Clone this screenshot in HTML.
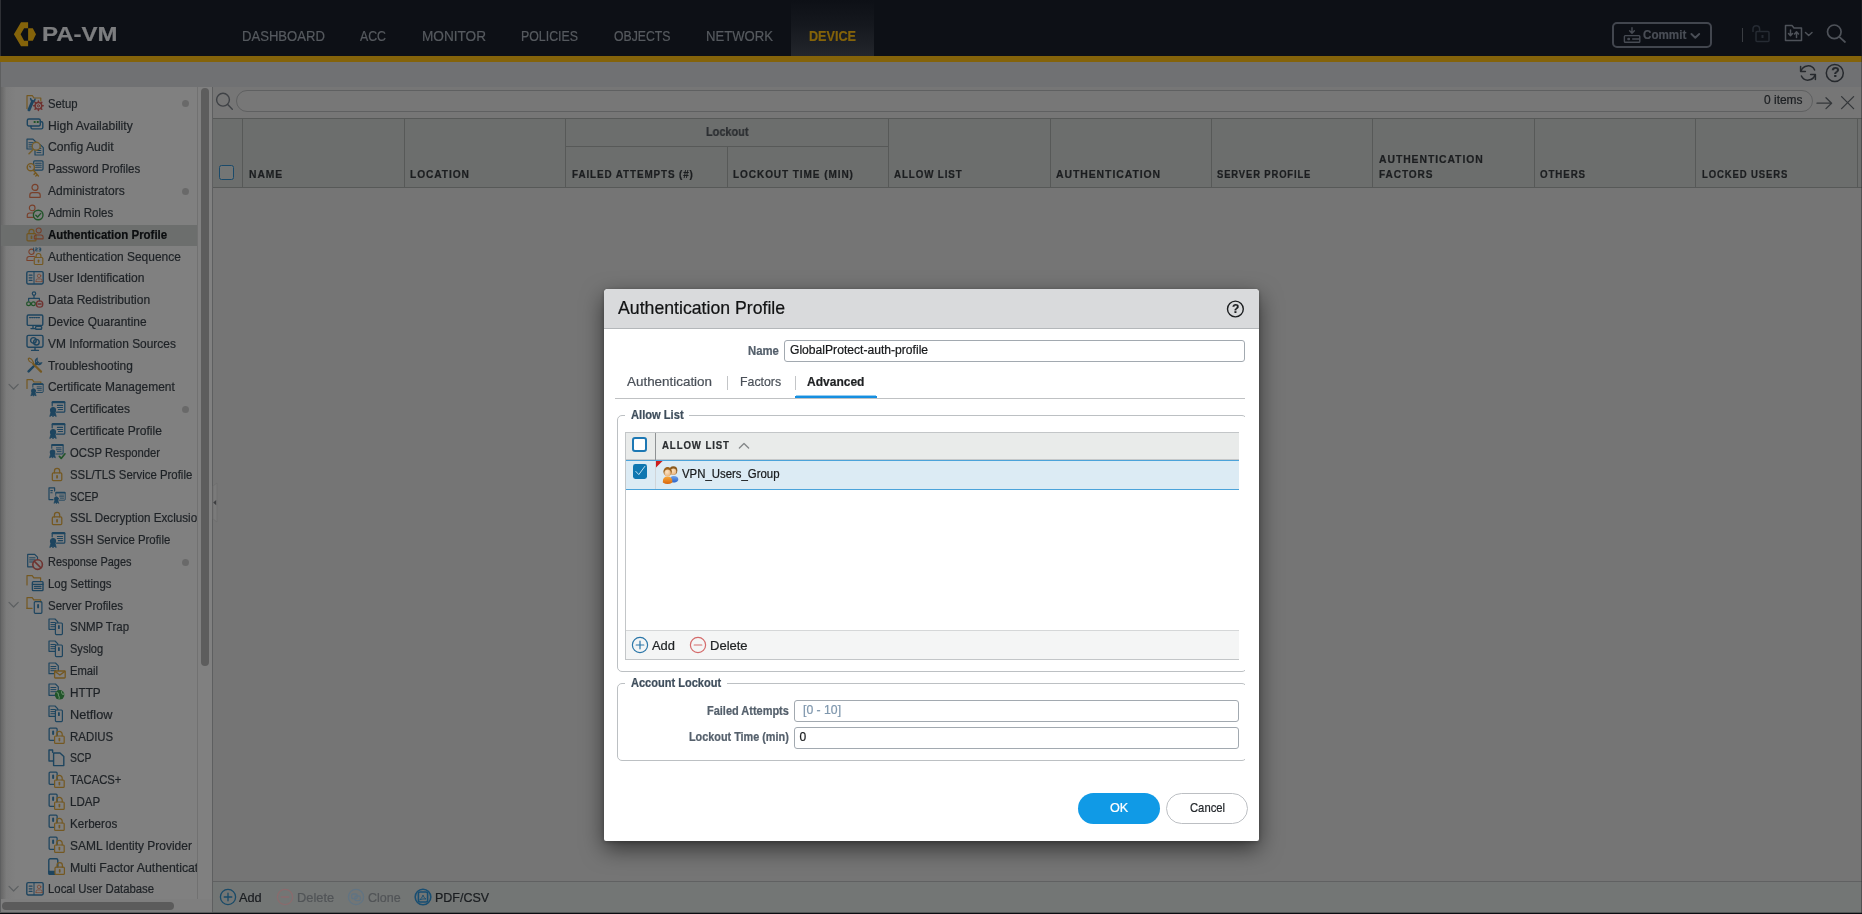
<!DOCTYPE html>
<html><head><meta charset="utf-8"><title>PA-VM</title>
<style>
html,body{margin:0;padding:0}
body{width:1862px;height:914px;overflow:hidden;position:relative;background:#757575;font-family:"Liberation Sans",sans-serif;}
.t{-webkit-text-stroke:0.22px currentColor;position:absolute;transform-origin:0 0;white-space:nowrap;line-height:1;font-family:"Liberation Sans",sans-serif;}
.a{position:absolute;}
svg{position:absolute;overflow:visible}
#root{position:absolute;left:0;top:0;width:1862px;height:914px;overflow:hidden;will-change:transform}

</style></head>
<body>
<div id="root">
<div class="a" style="left:0;top:0;width:1862px;height:56px;background:#0d1016"></div>
<div class="a" style="left:791px;top:0;width:83px;height:56px;background:linear-gradient(to bottom,#0d1016 0%,#15181e 45%,#23262c 100%)"></div>
<div class="a" style="left:0;top:56px;width:1862px;height:6px;background:#84630a"></div>
<div class="a" style="left:0;top:62px;width:1862px;height:25px;background:#707173"></div>
<svg style="left:0;top:0" width="60" height="56"><path d="M13.9 34.3 L21 22.3 L28.1 22.3 L28.1 28.2 L24.1 28.2 L20.6 34.3 L24.1 40.8 L28.1 40.8 L28.1 46.3 L21 46.3 Z" fill="#84630a"/><path d="M28.1 28.2 L32.8 28.2 L36 34.3 L32.8 40.8 L28.1 40.8 Z" fill="#84630a"/></svg>
<span class="t" style="left:42.00px;top:25.00px;font-size:19.5px;color:#7c7d7f;transform:scaleX(1.2308);font-weight:bold;">PA-VM</span>
<span class="t" style="left:241.50px;top:29.00px;font-size:14px;color:#565a5f;transform:scaleX(0.9343);">DASHBOARD</span>
<span class="t" style="left:360.30px;top:29.00px;font-size:14px;color:#565a5f;transform:scaleX(0.8802);">ACC</span>
<span class="t" style="left:422.30px;top:29.00px;font-size:14px;color:#565a5f;transform:scaleX(0.9726);">MONITOR</span>
<span class="t" style="left:521.30px;top:29.00px;font-size:14px;color:#565a5f;transform:scaleX(0.8832);">POLICIES</span>
<span class="t" style="left:614.00px;top:29.00px;font-size:14px;color:#565a5f;transform:scaleX(0.8739);">OBJECTS</span>
<span class="t" style="left:706.20px;top:29.00px;font-size:14px;color:#565a5f;transform:scaleX(0.9365);">NETWORK</span>
<span class="t" style="left:809.00px;top:29.00px;font-size:14px;color:#84630a;transform:scaleX(0.9025);font-weight:bold;">DEVICE</span>
<div class="a" style="left:1612px;top:22px;width:96px;height:22px;border:2px solid #42464e;border-radius:5px"></div>
<svg style="left:1620px;top:24px" width="24" height="22" fill="none" stroke="#474b53" stroke-width="1.4" stroke-linecap="round" stroke-linejoin="round"><path d="M12 3.8 V9 M9.6 6.8 L12 9.2 L14.4 6.8"/><rect x="4.4" y="11.6" width="15.4" height="6.6" rx="0.8"/><path d="M8.4 15 h0.6" stroke-width="2.4"/><path d="M12.6 15 H19.4" stroke-width="1.3"/></svg>
<span class="t" style="left:1642.90px;top:29.00px;font-size:12.6px;color:#4a4e56;transform:scaleX(0.9238);font-weight:bold;">Commit</span>
<svg style="left:1688px;top:28px" width="16" height="14" fill="none" stroke="#4a4e56" stroke-width="1.9" stroke-linecap="round" stroke-linejoin="round"><path d="M3.4 6 L7.3 9.7 L11.2 6"/></svg>
<div class="a" style="left:1742px;top:28px;width:1px;height:14px;background:#3a3d42"></div>
<svg style="left:1750px;top:22px" width="24" height="24" fill="none" stroke="#262b33" stroke-width="1.5" stroke-linejoin="round"><rect x="6" y="9.5" width="13" height="10" rx="1"/><path d="M3 10 V7 a3.3 3.3 0 0 1 6.6 0 V9.5"/><path d="M12.5 13 v3" stroke-width="2"/></svg>
<svg style="left:1783px;top:22px" width="34" height="24" fill="none" stroke="#4e5259" stroke-width="1.5" stroke-linejoin="round" stroke-linecap="round"><path d="M2.5 18.5 V3.5 H9 L11 6 H18.5 V18.5 Z"/><path d="M7.5 8 V13.5 M5.5 11.5 L7.5 13.7 L9.5 11.5 M13.5 15.5 V10 M11.5 12 L13.5 9.8 L15.5 12"/><path d="M22.5 10.5 L25.7 13.5 L29 10.5"/></svg>
<svg style="left:1822px;top:22px" width="28" height="24" fill="none" stroke="#4e5259" stroke-width="1.7" stroke-linecap="round"><circle cx="12.3" cy="9.8" r="6.8"/><path d="M17.3 14.8 L23 20"/></svg>
<svg style="left:1796px;top:62px" width="24" height="24" fill="none" stroke="#26292d" stroke-width="1.5" stroke-linecap="round" stroke-linejoin="round"><path d="M5 9.2 A7.3 7.3 0 0 1 18.6 8 M19 12.8 A7.3 7.3 0 0 1 5.4 14"/><path d="M4.6 4.6 V9.4 H9.4 M19.4 17.4 V12.6 H14.6"/></svg>
<svg style="left:1824px;top:62px" width="24" height="24" fill="none" stroke="#26292d" stroke-width="1.5"><circle cx="10.8" cy="11" r="8.5"/></svg>
<span class="t" style="left:1831.20px;top:65.00px;font-size:14px;color:#26292d;font-weight:bold;">?</span>
<div class="a" style="left:0;top:87px;width:197px;height:827px;background:#808080"></div>
<div class="a" style="left:0;top:87px;width:16px;height:827px;background:linear-gradient(to right,rgba(70,70,70,.5),rgba(100,100,100,.14) 40%,rgba(130,130,130,0))"></div>
<div class="a" style="left:197px;top:87px;width:1px;height:827px;background:#717171"></div>
<div class="a" style="left:198px;top:87px;width:14px;height:827px;background:#808080"></div>
<div class="a" style="left:201px;top:88px;width:8px;height:578px;border-radius:4px;background:#5d5d5d"></div>
<div class="a" style="left:1px;top:225px;width:196px;height:20.5px;background:#6c6e6d"></div>
<div class="a" style="left:0;top:87px;width:197px;height:816px;overflow:hidden"><div class="a" style="left:0;top:-87px"><svg style="left:25.9px;top:94.2px;opacity:.88" width="18" height="18" viewBox="0 0 18 18"><g fill="none" stroke="#735315" stroke-width="1.2" stroke-linecap="round" stroke-linejoin="round"><path d="M1 14.5 V1.7 H6.3 L8 4 H14.8 V7"/></g><g fill="none" stroke="#113d5b" stroke-width="1.2" stroke-linecap="round" stroke-linejoin="round"><path d="M3 15.8 L6.6 7.4" stroke-width="3"/><path d="M4.6 4.6 L5.6 7 L8.2 7.4 L9 5.2" stroke-width="1.5"/></g><g fill="none" stroke="#6c2825" stroke-width="1.2" stroke-linecap="round" stroke-linejoin="round"><circle cx="12.4" cy="11.8" r="3.3" stroke-width="1.5"/><circle cx="12.4" cy="11.8" r="1.1" stroke-width="1"/><path d="M12.4 7 v1.2 M12.4 15.4 v1.2 M7.6 11.8 h1.2 M16 11.8 h1.2 M9 8.4 l0.9 0.9 M14.9 14.3 l0.9 0.9 M15.8 8.4 l-0.9 0.9 M9.9 14.3 l-0.9 0.9" stroke-width="1.5"/></g></svg><span class="t" style="left:48.20px;top:97.00px;font-size:13px;color:#1e2226;transform:scaleX(0.8694);">Setup</span><div class="a" style="left:181.5px;top:100.2px;width:7px;height:7px;border-radius:50%;background:#696969"></div><svg style="left:25.9px;top:116.1px;opacity:.88" width="18" height="18" viewBox="0 0 18 18"><g fill="none" stroke="#113d5b" stroke-width="1.4" stroke-linecap="round" stroke-linejoin="round"><path d="M5 10.2 V11.5 a1.4 1.4 0 0 0 1.4 1.4 H15.4 a1.4 1.4 0 0 0 1.4 -1.4 V7.2 a1.4 1.4 0 0 0 -1.4 -1.4 H14.3"/><rect x="1.3" y="3" width="13" height="7" rx="1.5"/></g><rect x="7.7" y="5" width="1.9" height="2" fill="#154e1e"/><rect x="10.8" y="5" width="1.9" height="2" fill="#154e1e"/></svg><span class="t" style="left:48.20px;top:119.00px;font-size:13px;color:#1e2226;transform:scaleX(0.9332);">High Availability</span><svg style="left:25.9px;top:137.9px;opacity:.88" width="18" height="18" viewBox="0 0 18 18"><g transform="translate(0.3,0.5) scale(1.0)"><g fill="none" stroke="#113d5b" stroke-width="1.2" stroke-linecap="round" stroke-linejoin="round"><path d="M0.7 0.7 H6.7 L9.5 3.5 V10.5 H0.7 Z"/><path d="M2.6 4.2 H7.1 M2.6 6.3 H7.1 M2.6 8.4 H7.1" stroke-width="1"/></g></g><g transform="translate(8.3,6.2) scale(1.0)"><g fill="none" stroke="#113d5b" stroke-width="1.2" stroke-linecap="round" stroke-linejoin="round"><path d="M0.7 0.7 H6.2 L9 3.5 V10.8 H0.7 Z"/><path d="M2.6 4.2 H6.6 M2.6 6.3 H6.6 M2.6 8.4 H6.6" stroke-width="1"/></g></g><g fill="none" stroke="#735a22" stroke-width="1.4" stroke-linecap="round" stroke-linejoin="round"><circle cx="10.2" cy="8.2" r="4" fill="#7f7f7f"/><path d="M7.2 11.4 L3 15.8" stroke-width="1.5"/></g></svg><span class="t" style="left:48.20px;top:140.00px;font-size:13px;color:#1e2226;transform:scaleX(0.9362);">Config Audit</span><svg style="left:25.9px;top:159.7px;opacity:.88" width="18" height="18" viewBox="0 0 18 18"><g fill="none" stroke="#113d5b" stroke-width="1.2" stroke-linecap="round" stroke-linejoin="round"><rect x="7.7" y="0.8" width="9.3" height="9.3" rx="1"/><path d="M9.6 3.2 H15.2 M9.6 5.2 H15.2 M9.6 7.2 H15.2" stroke-width="1.1"/></g><g fill="none" stroke="#735315" stroke-width="1.4" stroke-linecap="round" stroke-linejoin="round"><circle cx="4.8" cy="7.2" r="3.6" fill="#808080"/><path d="M7.2 10 L12.4 16 M9.6 13 L8 14.4 M11.2 14.8 L9.8 16" stroke-width="1.4"/><path d="M3.6 6.2 l0.8 0.8" stroke-width="1.5"/></g></svg><span class="t" style="left:48.20px;top:162.00px;font-size:13px;color:#1e2226;transform:scaleX(0.8865);">Password Profiles</span><svg style="left:25.9px;top:181.5px;opacity:.88" width="18" height="18" viewBox="0 0 18 18"><g transform="translate(3,1.8) scale(1.0)"><g fill="none" stroke="#783820" stroke-width="1.2" stroke-linecap="round" stroke-linejoin="round"><circle cx="6" cy="3.6" r="3"/><path d="M0.8 13.5 V11.5 a2.6 2.6 0 0 1 2.6 -2.6 H8.6 a2.6 2.6 0 0 1 2.6 2.6 V13.5 M0.8 13.5 H11.2" /></g></g></svg><span class="t" style="left:48.20px;top:184.00px;font-size:13px;color:#1e2226;transform:scaleX(0.9245);">Administrators</span><div class="a" style="left:181.5px;top:187.5px;width:7px;height:7px;border-radius:50%;background:#696969"></div><svg style="left:25.9px;top:203.4px;opacity:.88" width="18" height="18" viewBox="0 0 18 18"><g transform="translate(0.5,1.5) scale(0.95)"><g fill="none" stroke="#783820" stroke-width="1.2" stroke-linecap="round" stroke-linejoin="round"><circle cx="6" cy="3.6" r="3"/><path d="M0.8 13.5 V11.5 a2.6 2.6 0 0 1 2.6 -2.6 H8.6 a2.6 2.6 0 0 1 2.6 2.6 V13.5 M0.8 13.5 H11.2" /></g></g><g fill="none" stroke="#154e1e" stroke-width="1.4" stroke-linecap="round" stroke-linejoin="round"><circle cx="12.2" cy="12" r="4.8" fill="#808080"/><path d="M9.8 12.2 L11.6 14 L14.8 10.4"/></g></svg><span class="t" style="left:48.20px;top:206.00px;font-size:13px;color:#1e2226;transform:scaleX(0.8845);">Admin Roles</span><svg style="left:25.9px;top:225.2px;opacity:.88" width="18" height="18" viewBox="0 0 18 18"><g transform="translate(0.3,3.6) scale(1.0)"><g fill="none" stroke="#735315" stroke-width="1.2" stroke-linecap="round" stroke-linejoin="round"><rect x="0.7" y="5" width="9" height="7.3" rx="1"/><path d="M2.7 5 V3.2 a2.5 2.5 0 0 1 5 0 V5"/><path d="M5.2 7.8 v1.8" stroke-width="1.7"/></g></g><g transform="translate(7.6,2.4) scale(0.85)"><g fill="none" stroke="#783820" stroke-width="1.2" stroke-linecap="round" stroke-linejoin="round"><circle cx="6" cy="3.6" r="3"/><path d="M0.8 13.5 V11.5 a2.6 2.6 0 0 1 2.6 -2.6 H8.6 a2.6 2.6 0 0 1 2.6 2.6 V13.5 M0.8 13.5 H11.2" /></g></g></svg><span class="t" style="left:48.20px;top:228.00px;font-size:13px;color:#0b0d0f;transform:scaleX(0.8825);font-weight:bold;">Authentication Profile</span><svg style="left:25.9px;top:247.0px;opacity:.88" width="18" height="18" viewBox="0 0 18 18"><g transform="translate(0.2,1.6) scale(0.88)"><g fill="none" stroke="#783820" stroke-width="1.2" stroke-linecap="round" stroke-linejoin="round"><circle cx="6" cy="3.6" r="3"/><path d="M0.8 13.5 V11.5 a2.6 2.6 0 0 1 2.6 -2.6 H8.6 a2.6 2.6 0 0 1 2.6 2.6 V13.5 M0.8 13.5 H11.2" /></g></g><g fill="none" stroke="#808080" stroke-width="0" stroke-linecap="round" stroke-linejoin="round"><rect x="7.6" y="10.6" width="10" height="7.6" stroke="none" fill="#808080"/></g><g transform="translate(7.6,5.8) scale(0.95)"><g fill="none" stroke="#735315" stroke-width="1.2" stroke-linecap="round" stroke-linejoin="round"><rect x="0.7" y="5" width="9" height="7.3" rx="1"/><path d="M2.7 5 V3.2 a2.5 2.5 0 0 1 5 0 V5"/><path d="M5.2 7.8 v1.8" stroke-width="1.7"/></g></g><g fill="none" stroke="#113d5b" stroke-width="1.2" stroke-linecap="round" stroke-linejoin="round"><path d="M7.6 1 v3 M9.6 1 h1.6 v1.4 h-1.6 v1.5 h1.7 M13 1 h1.7 v3 h-1.7 M13.4 2.4 h1.3" stroke-width="0.9"/></g></svg><span class="t" style="left:48.20px;top:250.00px;font-size:13px;color:#1e2226;transform:scaleX(0.9186);">Authentication Sequence</span><svg style="left:25.9px;top:268.8px;opacity:.88" width="18" height="18" viewBox="0 0 18 18"><g fill="none" stroke="#113d5b" stroke-width="1.4" stroke-linecap="round" stroke-linejoin="round"><rect x="0.8" y="2.6" width="16.4" height="12.4" rx="1.4"/><path d="M3.2 6.2 H6 M3.2 8.8 H6 M3.2 11.4 H6" stroke-width="1.2"/><path d="M8 3 V14.6" stroke-width="1"/></g><g transform="translate(9.6,4.8) scale(0.58)"><g fill="none" stroke="#783820" stroke-width="1.2" stroke-linecap="round" stroke-linejoin="round"><circle cx="6" cy="3.6" r="3"/><path d="M0.8 13.5 V11.5 a2.6 2.6 0 0 1 2.6 -2.6 H8.6 a2.6 2.6 0 0 1 2.6 2.6 V13.5 M0.8 13.5 H11.2" /></g></g></svg><span class="t" style="left:48.20px;top:271.00px;font-size:13px;color:#1e2226;transform:scaleX(0.9269);">User Identification</span><svg style="left:25.9px;top:290.6px;opacity:.88" width="18" height="18" viewBox="0 0 18 18"><g fill="none" stroke="#113d5b" stroke-width="1.2" stroke-linecap="round" stroke-linejoin="round"><circle cx="8" cy="2.6" r="1.7"/><path d="M8 4.6 V7.4 M2.6 10 V7.4 H13.4 V10"/></g><g fill="none" stroke="#154e1e" stroke-width="1.2" stroke-linecap="round" stroke-linejoin="round"><circle cx="2.6" cy="12.8" r="1.9"/><circle cx="7.4" cy="12.8" r="1.9"/></g><g fill="none" stroke="#6c2825" stroke-width="1.3" stroke-linecap="round" stroke-linejoin="round"><circle cx="13.6" cy="13" r="3.2"/><path d="M12 13 h3.2"/></g></svg><span class="t" style="left:48.20px;top:293.00px;font-size:13px;color:#1e2226;transform:scaleX(0.9231);">Data Redistribution</span><svg style="left:25.9px;top:312.5px;opacity:.88" width="18" height="18" viewBox="0 0 18 18"><g fill="none" stroke="#113d5b" stroke-width="1.4" stroke-linecap="round" stroke-linejoin="round"><rect x="1.2" y="2" width="15.6" height="10.4" rx="1.2"/><path d="M3.6 4.6 H14.4" stroke-dasharray="1 1.2" stroke-width="1.4"/><path d="M7 12.6 V15.4 M5 15.6 H9"/><rect x="9.6" y="13.4" width="6" height="2.8" rx="0.8"/></g></svg><span class="t" style="left:48.20px;top:315.00px;font-size:13px;color:#1e2226;transform:scaleX(0.9151);">Device Quarantine</span><svg style="left:25.9px;top:334.3px;opacity:.88" width="18" height="18" viewBox="0 0 18 18"><g fill="none" stroke="#113d5b" stroke-width="1.4" stroke-linecap="round" stroke-linejoin="round"><rect x="1" y="1.4" width="16" height="11.8" rx="1.6"/><circle cx="7.4" cy="6.4" r="2.8"/><circle cx="10.4" cy="8.2" r="2.8"/><path d="M9 13.4 V16 M5.6 16.4 H12.4"/></g></svg><span class="t" style="left:48.20px;top:337.00px;font-size:13px;color:#1e2226;transform:scaleX(0.9169);">VM Information Sources</span><svg style="left:25.9px;top:356.1px;opacity:.88" width="18" height="18" viewBox="0 0 18 18"><g fill="none" stroke="#113d5b" stroke-width="1.2" stroke-linecap="round" stroke-linejoin="round"><path d="M2.6 15.4 L11 7" stroke-width="2.4"/><path d="M11.2 2.2 a3.4 3.4 0 1 0 4.6 4.6 l-2.4 0.6 l-2.4 -2.6 z" stroke-width="1.2"/></g><g fill="none" stroke="#735315" stroke-width="1.2" stroke-linecap="round" stroke-linejoin="round"><path d="M15 15.6 L7.4 8" stroke-width="2.2"/><path d="M6.8 7.4 L3.4 5.4 L2.2 3 L3.2 2 L5.6 3.2 L7.6 6.6" stroke-width="1.1"/></g></svg><span class="t" style="left:48.20px;top:359.00px;font-size:13px;color:#1e2226;transform:scaleX(0.9149);">Troubleshooting</span><svg style="left:25.9px;top:377.9px;opacity:.88" width="18" height="18" viewBox="0 0 18 18"><g fill="none" stroke="#735315" stroke-width="1.2" stroke-linecap="round" stroke-linejoin="round"><path d="M1 10.5 V1.7 H6.3 L8 4 H14.8 V5"/></g><g transform="translate(3.4,4.6) scale(0.82)"><g transform="translate(0,0)"><g fill="none" stroke="#113d5b" stroke-width="1.2" stroke-linecap="round" stroke-linejoin="round"><path d="M4.2 5.6 V2.4 a1 1 0 0 1 1 -1 H15.8 a1 1 0 0 1 1 1 V11 a1 1 0 0 1 -1 1 H8.6"/><path d="M4.6 2.1 H16.4" stroke-width="1.9"/><path d="M9.4 5.2 H14.6 M9.4 7.3 H14.6 M10.4 9.4 H14.6" stroke-width="1.05"/></g><g fill="none" stroke="#113d5b" stroke-width="1.2" stroke-linecap="round" stroke-linejoin="round"><circle cx="5" cy="10" r="2.5" fill="#113d5b"/><path d="M3.2 11.6 L1.8 16.2 L4 15 L5 16.6 L6 15 L8.2 16.2 L6.8 11.6" fill="#113d5b" stroke-width="0.9"/></g></g></g></svg><span class="t" style="left:48.20px;top:380.00px;font-size:13px;color:#1e2226;transform:scaleX(0.9184);">Certificate Management</span><svg style="left:7px;top:381.1px" width="14" height="12" fill="none" stroke="#5c5f61" stroke-width="1.2" stroke-linecap="round" stroke-linejoin="round"><path d="M2 3.4 L6.6 8 L11.2 3.4"/></svg><svg style="left:47.6px;top:399.8px;opacity:.88" width="18" height="18" viewBox="0 0 18 18"><g transform="translate(0,0.2)"><g fill="none" stroke="#113d5b" stroke-width="1.2" stroke-linecap="round" stroke-linejoin="round"><path d="M4.2 5.6 V2.4 a1 1 0 0 1 1 -1 H15.8 a1 1 0 0 1 1 1 V11 a1 1 0 0 1 -1 1 H8.6"/><path d="M4.6 2.1 H16.4" stroke-width="1.9"/><path d="M9.4 5.2 H14.6 M9.4 7.3 H14.6 M10.4 9.4 H14.6" stroke-width="1.05"/></g><g fill="none" stroke="#113d5b" stroke-width="1.2" stroke-linecap="round" stroke-linejoin="round"><circle cx="5" cy="10" r="2.5" fill="#113d5b"/><path d="M3.2 11.6 L1.8 16.2 L4 15 L5 16.6 L6 15 L8.2 16.2 L6.8 11.6" fill="#113d5b" stroke-width="0.9"/></g></g></svg><span class="t" style="left:69.90px;top:402.00px;font-size:13px;color:#1e2226;transform:scaleX(0.9231);">Certificates</span><div class="a" style="left:181.5px;top:405.8px;width:7px;height:7px;border-radius:50%;background:#696969"></div><svg style="left:47.6px;top:421.6px;opacity:.88" width="18" height="18" viewBox="0 0 18 18"><g transform="translate(0,0.2)"><g fill="none" stroke="#113d5b" stroke-width="1.2" stroke-linecap="round" stroke-linejoin="round"><path d="M4.2 5.6 V2.4 a1 1 0 0 1 1 -1 H15.8 a1 1 0 0 1 1 1 V11 a1 1 0 0 1 -1 1 H8.6"/><path d="M4.6 2.1 H16.4" stroke-width="1.9"/><path d="M9.4 5.2 H14.6 M9.4 7.3 H14.6 M10.4 9.4 H14.6" stroke-width="1.05"/></g><g fill="none" stroke="#113d5b" stroke-width="1.2" stroke-linecap="round" stroke-linejoin="round"><circle cx="5" cy="10" r="2.5" fill="#113d5b"/><path d="M3.2 11.6 L1.8 16.2 L4 15 L5 16.6 L6 15 L8.2 16.2 L6.8 11.6" fill="#113d5b" stroke-width="0.9"/></g></g></svg><span class="t" style="left:69.90px;top:424.00px;font-size:13px;color:#1e2226;transform:scaleX(0.9289);">Certificate Profile</span><svg style="left:47.6px;top:443.4px;opacity:.88" width="18" height="18" viewBox="0 0 18 18"><g transform="translate(0,0) scale(0.9)"><g transform="translate(0,0.2)"><g fill="none" stroke="#113d5b" stroke-width="1.2" stroke-linecap="round" stroke-linejoin="round"><path d="M4.2 5.6 V2.4 a1 1 0 0 1 1 -1 H15.8 a1 1 0 0 1 1 1 V11 a1 1 0 0 1 -1 1 H8.6"/><path d="M4.6 2.1 H16.4" stroke-width="1.9"/><path d="M9.4 5.2 H14.6 M9.4 7.3 H14.6 M10.4 9.4 H14.6" stroke-width="1.05"/></g><g fill="none" stroke="#113d5b" stroke-width="1.2" stroke-linecap="round" stroke-linejoin="round"><circle cx="5" cy="10" r="2.5" fill="#113d5b"/><path d="M3.2 11.6 L1.8 16.2 L4 15 L5 16.6 L6 15 L8.2 16.2 L6.8 11.6" fill="#113d5b" stroke-width="0.9"/></g></g></g><g fill="none" stroke="#154e1e" stroke-width="1.2" stroke-linecap="round" stroke-linejoin="round"><path d="M11.4 13.4 L13.2 15.4 L17 10.8" stroke-width="1.6"/></g></svg><span class="t" style="left:69.90px;top:446.00px;font-size:13px;color:#1e2226;transform:scaleX(0.8674);">OCSP Responder</span><svg style="left:47.6px;top:465.2px;opacity:.88" width="18" height="18" viewBox="0 0 18 18"><g transform="translate(3.6,2.6) scale(1.05)"><g fill="none" stroke="#735315" stroke-width="1.2" stroke-linecap="round" stroke-linejoin="round"><rect x="0.7" y="5" width="9" height="7.3" rx="1"/><path d="M2.7 5 V3.2 a2.5 2.5 0 0 1 5 0 V5"/><path d="M5.2 7.8 v1.8" stroke-width="1.7"/></g></g></svg><span class="t" style="left:69.90px;top:468.00px;font-size:13px;color:#1e2226;transform:scaleX(0.8768);">SSL/TLS Service Profile</span><svg style="left:47.6px;top:487.0px;opacity:.88" width="18" height="18" viewBox="0 0 18 18"><g fill="none" stroke="#113d5b" stroke-width="1.2" stroke-linecap="round" stroke-linejoin="round"><path d="M1 0.9 H6.6 V4 M1 0.9 V12.6 H5"/><path d="M2.8 3.6 h1.6 M2.8 5.8 h1.4" stroke-width="1.1"/></g><g transform="translate(4.6,4.2) scale(0.75)"><g transform="translate(0,0)"><g fill="none" stroke="#113d5b" stroke-width="1.2" stroke-linecap="round" stroke-linejoin="round"><path d="M4.2 5.6 V2.4 a1 1 0 0 1 1 -1 H15.8 a1 1 0 0 1 1 1 V11 a1 1 0 0 1 -1 1 H8.6"/><path d="M4.6 2.1 H16.4" stroke-width="1.9"/><path d="M9.4 5.2 H14.6 M9.4 7.3 H14.6 M10.4 9.4 H14.6" stroke-width="1.05"/></g><g fill="none" stroke="#113d5b" stroke-width="1.2" stroke-linecap="round" stroke-linejoin="round"><circle cx="5" cy="10" r="2.5" fill="#113d5b"/><path d="M3.2 11.6 L1.8 16.2 L4 15 L5 16.6 L6 15 L8.2 16.2 L6.8 11.6" fill="#113d5b" stroke-width="0.9"/></g></g></g></svg><span class="t" style="left:69.90px;top:490.00px;font-size:13px;color:#1e2226;transform:scaleX(0.8060);">SCEP</span><svg style="left:47.6px;top:508.9px;opacity:.88" width="18" height="18" viewBox="0 0 18 18"><g transform="translate(3.6,2.6) scale(1.05)"><g fill="none" stroke="#735315" stroke-width="1.2" stroke-linecap="round" stroke-linejoin="round"><rect x="0.7" y="5" width="9" height="7.3" rx="1"/><path d="M2.7 5 V3.2 a2.5 2.5 0 0 1 5 0 V5"/><path d="M5.2 7.8 v1.8" stroke-width="1.7"/></g></g></svg><span class="t" style="left:69.90px;top:511.00px;font-size:13px;color:#1e2226;transform:scaleX(0.8960);">SSL Decryption Exclusion</span><svg style="left:47.6px;top:530.7px;opacity:.88" width="18" height="18" viewBox="0 0 18 18"><g transform="translate(0,0.2)"><g fill="none" stroke="#113d5b" stroke-width="1.2" stroke-linecap="round" stroke-linejoin="round"><path d="M4.2 5.6 V2.4 a1 1 0 0 1 1 -1 H15.8 a1 1 0 0 1 1 1 V11 a1 1 0 0 1 -1 1 H8.6"/><path d="M4.6 2.1 H16.4" stroke-width="1.9"/><path d="M9.4 5.2 H14.6 M9.4 7.3 H14.6 M10.4 9.4 H14.6" stroke-width="1.05"/></g><g fill="none" stroke="#113d5b" stroke-width="1.2" stroke-linecap="round" stroke-linejoin="round"><circle cx="5" cy="10" r="2.5" fill="#113d5b"/><path d="M3.2 11.6 L1.8 16.2 L4 15 L5 16.6 L6 15 L8.2 16.2 L6.8 11.6" fill="#113d5b" stroke-width="0.9"/></g></g></svg><span class="t" style="left:69.90px;top:533.00px;font-size:13px;color:#1e2226;transform:scaleX(0.8787);">SSH Service Profile</span><svg style="left:25.9px;top:552.5px;opacity:.88" width="18" height="18" viewBox="0 0 18 18"><g transform="translate(1,0.6) scale(1.0)"><g fill="none" stroke="#113d5b" stroke-width="1.2" stroke-linecap="round" stroke-linejoin="round"><path d="M0.7 0.7 H7.7 L10.5 3.5 V13.2 H0.7 Z"/><path d="M2.6 4.2 H8.1 M2.6 6.3 H8.1 M2.6 8.4 H8.1" stroke-width="1"/></g></g><g fill="none" stroke="#6c2825" stroke-width="1.6" stroke-linecap="round" stroke-linejoin="round"><circle cx="11.6" cy="11.6" r="4.8" fill="#808080"/><path d="M8.4 8.4 L14.8 14.8"/></g></svg><span class="t" style="left:48.20px;top:555.00px;font-size:13px;color:#1e2226;transform:scaleX(0.8429);">Response Pages</span><div class="a" style="left:181.5px;top:558.5px;width:7px;height:7px;border-radius:50%;background:#696969"></div><svg style="left:25.9px;top:574.3px;opacity:.88" width="18" height="18" viewBox="0 0 18 18"><g fill="none" stroke="#735315" stroke-width="1.2" stroke-linecap="round" stroke-linejoin="round"><path d="M1 11 V1.6 H6.2 L7.8 3.8 H14.6 V6.4"/></g><g fill="none" stroke="#113d5b" stroke-width="1.4" stroke-linecap="round" stroke-linejoin="round"><rect x="6.4" y="7.6" width="10.6" height="9" rx="0.8"/><path d="M6.4 10.4 H17 M8.4 12.4 H15 M8.4 14.4 H15" stroke-width="1.1"/></g></svg><span class="t" style="left:48.20px;top:577.00px;font-size:13px;color:#1e2226;transform:scaleX(0.8785);">Log Settings</span><svg style="left:25.9px;top:596.2px;opacity:.88" width="18" height="18" viewBox="0 0 18 18"><g fill="none" stroke="#735315" stroke-width="1.2" stroke-linecap="round" stroke-linejoin="round"><path d="M1 12.4 V1.6 H6.2 L7.8 3.8 H14.6 V6"/><path d="M1 12.4 H6"/></g><g transform="translate(7.6,5) scale(1.0)"><g fill="none" stroke="#113d5b" stroke-width="1.2" stroke-linecap="round" stroke-linejoin="round"><rect x="0.7" y="0.7" width="7.6" height="11.6" rx="1"/><path d="M4.5 4 v2.4" stroke-width="1.9"/></g></g></svg><span class="t" style="left:48.20px;top:599.00px;font-size:13px;color:#1e2226;transform:scaleX(0.8795);">Server Profiles</span><svg style="left:7px;top:599.4px" width="14" height="12" fill="none" stroke="#5c5f61" stroke-width="1.2" stroke-linecap="round" stroke-linejoin="round"><path d="M2 3.4 L6.6 8 L11.2 3.4"/></svg><svg style="left:47.6px;top:618.0px;opacity:.88" width="18" height="18" viewBox="0 0 18 18"><g transform="translate(0.3,0.3) scale(1.0)"><g fill="none" stroke="#113d5b" stroke-width="1.2" stroke-linecap="round" stroke-linejoin="round"><path d="M0.7 0.7 H6.7 L9.5 3.5 V11 H0.7 Z"/><path d="M2.6 4.2 H7.1 M2.6 6.3 H7.1 M2.6 8.4 H7.1" stroke-width="1"/></g></g><g><g fill="none" stroke="#113d5b" stroke-width="1.2" stroke-linecap="round" stroke-linejoin="round"><rect x="7.4" y="5" width="7" height="11.6" rx="1" fill="#808080"/><path d="M10.9 8 v2.2" stroke-width="1.8"/></g></g></svg><span class="t" style="left:69.90px;top:620.00px;font-size:13px;color:#1e2226;transform:scaleX(0.8813);">SNMP Trap</span><svg style="left:47.6px;top:639.8px;opacity:.88" width="18" height="18" viewBox="0 0 18 18"><g transform="translate(0.3,0.3) scale(1.0)"><g fill="none" stroke="#113d5b" stroke-width="1.2" stroke-linecap="round" stroke-linejoin="round"><path d="M0.7 0.7 H6.7 L9.5 3.5 V11 H0.7 Z"/><path d="M2.6 4.2 H7.1 M2.6 6.3 H7.1 M2.6 8.4 H7.1" stroke-width="1"/></g></g><g><g fill="none" stroke="#113d5b" stroke-width="1.2" stroke-linecap="round" stroke-linejoin="round"><rect x="7.4" y="5" width="7" height="11.6" rx="1" fill="#808080"/><path d="M10.9 8 v2.2" stroke-width="1.8"/></g></g></svg><span class="t" style="left:69.90px;top:642.00px;font-size:13px;color:#1e2226;transform:scaleX(0.8487);">Syslog</span><svg style="left:47.6px;top:661.6px;opacity:.88" width="18" height="18" viewBox="0 0 18 18"><g transform="translate(0.3,0.3) scale(1.0)"><g fill="none" stroke="#113d5b" stroke-width="1.2" stroke-linecap="round" stroke-linejoin="round"><path d="M0.7 0.7 H7.2 L10 3.5 V11.4 H0.7 Z"/><path d="M2.6 4.2 H7.6 M2.6 6.3 H7.6 M2.6 8.4 H7.6" stroke-width="1"/></g></g><g fill="none" stroke="#735315" stroke-width="1.3" stroke-linecap="round" stroke-linejoin="round"><rect x="6.6" y="9" width="10.6" height="7" rx="0.8" fill="#808080"/><path d="M6.9 9.4 L11.9 13 L16.9 9.4"/></g></svg><span class="t" style="left:69.90px;top:664.00px;font-size:13px;color:#1e2226;transform:scaleX(0.8646);">Email</span><svg style="left:47.6px;top:683.4px;opacity:.88" width="18" height="18" viewBox="0 0 18 18"><g transform="translate(0.3,0.3) scale(1.0)"><g fill="none" stroke="#113d5b" stroke-width="1.2" stroke-linecap="round" stroke-linejoin="round"><path d="M0.7 0.7 H7.2 L10 3.5 V12 H0.7 Z"/><path d="M2.6 4.2 H7.6 M2.6 6.3 H7.6 M2.6 8.4 H7.6" stroke-width="1"/></g></g><circle cx="11.6" cy="11.8" r="4.8" fill="#154e1e"/><g fill="none" stroke="#5f8a62" stroke-width="1.2" stroke-linecap="round" stroke-linejoin="round"><path d="M9 9.6 q2 1 1.4 3 q1.6 1.2 0.6 3.4 M13.6 8.4 q-0.6 2 1 2.8 q1 0.4 1.6 -0.6" stroke-width="1.1"/></g></svg><span class="t" style="left:69.90px;top:686.00px;font-size:13px;color:#1e2226;transform:scaleX(0.9019);">HTTP</span><svg style="left:47.6px;top:705.3px;opacity:.88" width="18" height="18" viewBox="0 0 18 18"><g transform="translate(0.3,0.3) scale(1.0)"><g fill="none" stroke="#113d5b" stroke-width="1.2" stroke-linecap="round" stroke-linejoin="round"><path d="M0.7 0.7 H6.7 L9.5 3.5 V11 H0.7 Z"/><path d="M2.6 4.2 H7.1 M2.6 6.3 H7.1 M2.6 8.4 H7.1" stroke-width="1"/></g></g><g><g fill="none" stroke="#113d5b" stroke-width="1.2" stroke-linecap="round" stroke-linejoin="round"><rect x="7.4" y="5" width="7" height="11.6" rx="1" fill="#808080"/><path d="M10.9 8 v2.2" stroke-width="1.8"/></g></g></svg><span class="t" style="left:69.90px;top:708.00px;font-size:13px;color:#1e2226;transform:scaleX(0.9788);">Netflow</span><svg style="left:47.6px;top:727.1px;opacity:.88" width="18" height="18" viewBox="0 0 18 18"><g transform="translate(0.4,0.4) scale(1.05)"><g fill="none" stroke="#113d5b" stroke-width="1.2" stroke-linecap="round" stroke-linejoin="round"><rect x="0.7" y="0.7" width="7.6" height="11.6" rx="1"/><path d="M4.5 4 v2.4" stroke-width="1.9"/></g></g><g fill="none" stroke="#735315" stroke-width="1.2" stroke-linecap="round" stroke-linejoin="round"><rect x="6.6" y="9" width="9.6" height="7.4" rx="1" fill="#808080"/><path d="M8.6 9 V7.2 a2.8 2.8 0 0 1 5.6 0 V9"/><path d="M11.4 11.6 v2" stroke-width="1.7"/></g></svg><span class="t" style="left:69.90px;top:730.00px;font-size:13px;color:#1e2226;transform:scaleX(0.8791);">RADIUS</span><svg style="left:47.6px;top:748.9px;opacity:.88" width="18" height="18" viewBox="0 0 18 18"><g fill="none" stroke="#113d5b" stroke-width="1.4" stroke-linecap="round" stroke-linejoin="round"><path d="M4.6 3.2 V1 H1 V12 H5" /><path d="M5.6 4 H12 L15.8 7.6 V16.6 H5.6 Z" fill="#808080"/></g></svg><span class="t" style="left:69.90px;top:751.00px;font-size:13px;color:#1e2226;transform:scaleX(0.8028);">SCP</span><svg style="left:47.6px;top:770.7px;opacity:.88" width="18" height="18" viewBox="0 0 18 18"><g transform="translate(0.4,0.4) scale(1.05)"><g fill="none" stroke="#113d5b" stroke-width="1.2" stroke-linecap="round" stroke-linejoin="round"><rect x="0.7" y="0.7" width="7.6" height="11.6" rx="1"/><path d="M4.5 4 v2.4" stroke-width="1.9"/></g></g><g fill="none" stroke="#735315" stroke-width="1.2" stroke-linecap="round" stroke-linejoin="round"><rect x="6.6" y="9" width="9.6" height="7.4" rx="1" fill="#808080"/><path d="M8.6 9 V7.2 a2.8 2.8 0 0 1 5.6 0 V9"/><path d="M11.4 11.6 v2" stroke-width="1.7"/></g></svg><span class="t" style="left:69.90px;top:773.00px;font-size:13px;color:#1e2226;transform:scaleX(0.8652);">TACACS+</span><svg style="left:47.6px;top:792.6px;opacity:.88" width="18" height="18" viewBox="0 0 18 18"><g transform="translate(0.4,0.4) scale(1.05)"><g fill="none" stroke="#113d5b" stroke-width="1.2" stroke-linecap="round" stroke-linejoin="round"><rect x="0.7" y="0.7" width="7.6" height="11.6" rx="1"/><path d="M4.5 4 v2.4" stroke-width="1.9"/></g></g><g fill="none" stroke="#735315" stroke-width="1.2" stroke-linecap="round" stroke-linejoin="round"><rect x="6.6" y="9" width="9.6" height="7.4" rx="1" fill="#808080"/><path d="M8.6 9 V7.2 a2.8 2.8 0 0 1 5.6 0 V9"/><path d="M11.4 11.6 v2" stroke-width="1.7"/></g></svg><span class="t" style="left:69.90px;top:795.00px;font-size:13px;color:#1e2226;transform:scaleX(0.8871);">LDAP</span><svg style="left:47.6px;top:814.4px;opacity:.88" width="18" height="18" viewBox="0 0 18 18"><g transform="translate(0.4,0.4) scale(1.05)"><g fill="none" stroke="#113d5b" stroke-width="1.2" stroke-linecap="round" stroke-linejoin="round"><rect x="0.7" y="0.7" width="7.6" height="11.6" rx="1"/><path d="M4.5 4 v2.4" stroke-width="1.9"/></g></g><g fill="none" stroke="#735315" stroke-width="1.2" stroke-linecap="round" stroke-linejoin="round"><rect x="6.6" y="9" width="9.6" height="7.4" rx="1" fill="#808080"/><path d="M8.6 9 V7.2 a2.8 2.8 0 0 1 5.6 0 V9"/><path d="M11.4 11.6 v2" stroke-width="1.7"/></g></svg><span class="t" style="left:69.90px;top:817.00px;font-size:13px;color:#1e2226;transform:scaleX(0.8962);">Kerberos</span><svg style="left:47.6px;top:836.2px;opacity:.88" width="18" height="18" viewBox="0 0 18 18"><g transform="translate(0.4,0.4) scale(1.05)"><g fill="none" stroke="#113d5b" stroke-width="1.2" stroke-linecap="round" stroke-linejoin="round"><rect x="0.7" y="0.7" width="7.6" height="11.6" rx="1"/><path d="M4.5 4 v2.4" stroke-width="1.9"/></g></g><g fill="none" stroke="#735315" stroke-width="1.2" stroke-linecap="round" stroke-linejoin="round"><rect x="6.6" y="9" width="9.6" height="7.4" rx="1" fill="#808080"/><path d="M8.6 9 V7.2 a2.8 2.8 0 0 1 5.6 0 V9"/><path d="M11.4 11.6 v2" stroke-width="1.7"/></g></svg><span class="t" style="left:69.90px;top:839.00px;font-size:13px;color:#1e2226;transform:scaleX(0.9202);">SAML Identity Provider</span><svg style="left:47.6px;top:858.0px;opacity:.88" width="18" height="18" viewBox="0 0 18 18"><g fill="none" stroke="#113d5b" stroke-width="1.4" stroke-linecap="round" stroke-linejoin="round"><rect x="0.8" y="0.8" width="9" height="15.6" rx="1.4"/><path d="M1 14 H9.6 V16 H1 Z" fill="#113d5b"/><path d="M0.8 13.4 H9.8"/><path d="M4.4 15 h1.8" stroke-width="1.2"/></g><g fill="none" stroke="#735315" stroke-width="1.2" stroke-linecap="round" stroke-linejoin="round"><rect x="7" y="9.2" width="9.4" height="7.2" rx="1" fill="#808080"/><path d="M9 9.2 V7.4 a2.7 2.7 0 0 1 5.4 0 V9.2"/><path d="M11.7 11.8 v2" stroke-width="1.7"/></g></svg><span class="t" style="left:69.90px;top:861.00px;font-size:13px;color:#1e2226;transform:scaleX(0.9442);">Multi Factor Authentication</span><svg style="left:25.9px;top:879.8px;opacity:.88" width="18" height="18" viewBox="0 0 18 18"><g fill="none" stroke="#113d5b" stroke-width="1.4" stroke-linecap="round" stroke-linejoin="round"><rect x="0.8" y="2.6" width="16.4" height="12.4" rx="1.4"/><path d="M3.2 6.2 H6 M3.2 8.8 H6 M3.2 11.4 H6" stroke-width="1.2"/><path d="M8 3 V14.6" stroke-width="1"/></g><g transform="translate(9.6,4.8) scale(0.58)"><g fill="none" stroke="#783820" stroke-width="1.2" stroke-linecap="round" stroke-linejoin="round"><circle cx="6" cy="3.6" r="3"/><path d="M0.8 13.5 V11.5 a2.6 2.6 0 0 1 2.6 -2.6 H8.6 a2.6 2.6 0 0 1 2.6 2.6 V13.5 M0.8 13.5 H11.2" /></g></g></svg><span class="t" style="left:48.20px;top:882.00px;font-size:13px;color:#1e2226;transform:scaleX(0.8738);">Local User Database</span><svg style="left:7px;top:883.0px" width="14" height="12" fill="none" stroke="#5c5f61" stroke-width="1.2" stroke-linecap="round" stroke-linejoin="round"><path d="M2 3.4 L6.6 8 L11.2 3.4"/></svg></div></div>
<div class="a" style="left:0;top:899px;width:212px;height:14px;background:#7e7e7e"></div>
<div class="a" style="left:2px;top:902px;width:172px;height:7.5px;border-radius:4px;background:#5b5b5b"></div>
<div class="a" style="left:212px;top:87px;width:1px;height:825px;background:#5e5f60"></div>
<svg style="left:212px;top:480px" width="8" height="46"><path d="M1 6 L5 3 V42 L1 39 Z" fill="#7a7a7a" stroke="#6c6c6c" stroke-width="0.6"/><path d="M4.2 20 L1.2 22.6 L4.2 25.2 Z" fill="#3d3e40"/></svg>
<div class="a" style="left:213px;top:87px;width:1649px;height:31px;background:#767676"></div>
<svg style="left:214px;top:90px" width="22" height="22" fill="none" stroke="#3f4246" stroke-width="1.4" stroke-linecap="round"><circle cx="9" cy="9.7" r="6.4"/><path d="M13.7 14.6 L18.3 19.2"/></svg>
<div class="a" style="left:236px;top:90px;width:1575px;height:20px;border:1px solid #5f6061;border-radius:11px;background:#777777"></div>
<span class="t" style="left:1763.50px;top:94.00px;font-size:12px;color:#1c1f22;transform:scaleX(0.9964);">0 items</span>
<svg style="left:1814px;top:94px" width="44" height="18" fill="none" stroke="#34373a" stroke-width="1.3" stroke-linecap="round" stroke-linejoin="round"><path d="M3 9.2 H17.4 M12 3.8 L17.6 9.2 L12 14.6"/><path d="M27.6 2.6 L39.6 14.6 M39.6 2.6 L27.6 14.6"/></svg>
<div class="a" style="left:213px;top:118px;width:1649px;height:70px;background:#6c6e6d;border-top:1px solid #575958;border-bottom:1px solid #575958;box-sizing:border-box"></div>
<div class="a" style="left:242.0px;top:119px;width:1px;height:69px;background:#575958"></div>
<div class="a" style="left:404.0px;top:119px;width:1px;height:69px;background:#575958"></div>
<div class="a" style="left:565.0px;top:119px;width:1px;height:69px;background:#575958"></div>
<div class="a" style="left:727.0px;top:147px;width:1px;height:41px;background:#575958"></div>
<div class="a" style="left:888.0px;top:119px;width:1px;height:69px;background:#575958"></div>
<div class="a" style="left:1050.0px;top:119px;width:1px;height:69px;background:#575958"></div>
<div class="a" style="left:1211.0px;top:119px;width:1px;height:69px;background:#575958"></div>
<div class="a" style="left:1372.0px;top:119px;width:1px;height:69px;background:#575958"></div>
<div class="a" style="left:1534.0px;top:119px;width:1px;height:69px;background:#575958"></div>
<div class="a" style="left:1695.0px;top:119px;width:1px;height:69px;background:#575958"></div>
<div class="a" style="left:1857.0px;top:119px;width:1px;height:69px;background:#575958"></div>
<div class="a" style="left:566px;top:146px;width:322px;height:1px;background:#575958"></div>
<div class="a" style="left:219px;top:165px;width:14.5px;height:15px;box-sizing:border-box;border:1.8px solid #1a4a6a;border-radius:2.5px;background:#747675"></div>
<span class="t" style="left:248.80px;top:169.00px;font-size:11px;color:#1c1e20;transform:scaleX(0.9394);letter-spacing:1.00px;font-weight:bold;">NAME</span>
<span class="t" style="left:410.40px;top:169.00px;font-size:11px;color:#1c1e20;transform:scaleX(0.9269);letter-spacing:1.00px;font-weight:bold;">LOCATION</span>
<span class="t" style="left:571.50px;top:169.00px;font-size:11px;color:#1c1e20;transform:scaleX(0.8975);letter-spacing:1.00px;font-weight:bold;">FAILED ATTEMPTS (#)</span>
<span class="t" style="left:733.20px;top:169.00px;font-size:11px;color:#1c1e20;transform:scaleX(0.9140);letter-spacing:1.00px;font-weight:bold;">LOCKOUT TIME (MIN)</span>
<span class="t" style="left:894.30px;top:169.00px;font-size:11px;color:#1c1e20;transform:scaleX(0.8883);letter-spacing:1.00px;font-weight:bold;">ALLOW LIST</span>
<span class="t" style="left:1055.50px;top:169.00px;font-size:11px;color:#1c1e20;transform:scaleX(0.9471);letter-spacing:1.00px;font-weight:bold;">AUTHENTICATION</span>
<span class="t" style="left:1217.20px;top:169.00px;font-size:11px;color:#1c1e20;transform:scaleX(0.8584);letter-spacing:1.00px;font-weight:bold;">SERVER PROFILE</span>
<span class="t" style="left:1378.50px;top:154.00px;font-size:11px;color:#1c1e20;transform:scaleX(0.9435);letter-spacing:1.00px;font-weight:bold;">AUTHENTICATION</span>
<span class="t" style="left:1378.50px;top:169.00px;font-size:11px;color:#1c1e20;transform:scaleX(0.9167);letter-spacing:1.00px;font-weight:bold;">FACTORS</span>
<span class="t" style="left:1540.30px;top:169.00px;font-size:11px;color:#1c1e20;transform:scaleX(0.8866);letter-spacing:1.00px;font-weight:bold;">OTHERS</span>
<span class="t" style="left:1701.60px;top:169.00px;font-size:11px;color:#1c1e20;transform:scaleX(0.8674);letter-spacing:1.00px;font-weight:bold;">LOCKED USERS</span>
<span class="t" style="left:706.30px;top:126.00px;font-size:12px;color:#2b2e31;transform:scaleX(0.9105);font-weight:bold;">Lockout</span>
<div class="a" style="left:213px;top:881px;width:1649px;height:32px;background:#737675;border-top:1px solid #606162;box-sizing:border-box"></div>
<div class="a" style="left:0;top:912px;width:1862px;height:1px;background:rgba(10,12,16,.3)"></div><div class="a" style="left:0;top:913px;width:1862px;height:1px;background:#0b0d11"></div>
<div class="a" style="left:1861px;top:0;width:1px;height:913px;background:rgba(40,40,42,.45)"></div>
<div class="a" style="left:0;top:0;width:1px;height:56px;background:#2e3035"></div><div class="a" style="left:0;top:62px;width:1px;height:851px;background:#5e5f60"></div>
<svg style="left:217.5px;top:887.0px" width="20" height="20" fill="none" stroke="#184a68" stroke-width="1.3" stroke-linecap="round" stroke-linejoin="round"><circle cx="10" cy="10" r="7.6"/><path d="M6.2 10 H13.8 M10 6.2 V13.8"/></svg>
<span class="t" style="left:239.20px;top:891.00px;font-size:13px;color:#1a1d20;transform:scaleX(0.9810);">Add</span>
<svg style="left:274.5px;top:887.0px" width="20" height="20" fill="none" stroke="#8a6b6d" stroke-width="1.3" stroke-linecap="round" stroke-linejoin="round"><circle cx="10" cy="10" r="7.6"/><path d="M6.2 10 H13.8"/></svg>
<span class="t" style="left:296.60px;top:891.00px;font-size:13px;color:#515457;transform:scaleX(0.9875);">Delete</span>
<svg style="left:346.4px;top:887.0px" width="20" height="20" fill="none" stroke="#617483" stroke-width="1.3" stroke-linecap="round" stroke-linejoin="round"><circle cx="10" cy="10" r="7.6"/><rect x="5.6" y="7" width="5.6" height="4.6" rx="1.6"/><rect x="8.8" y="9" width="5.6" height="4.6" rx="1.6"/></svg>
<span class="t" style="left:368.40px;top:891.00px;font-size:13px;color:#515457;transform:scaleX(0.9608);">Clone</span>
<svg style="left:412.9px;top:887.0px" width="20" height="20" fill="none" stroke="#184e72" stroke-width="1.6" stroke-linecap="round" stroke-linejoin="round"><circle cx="10" cy="10" r="7.8"/><rect x="5.4" y="5" width="9.2" height="10" rx="1.6"/><path d="M7 12.6 q2 -1 3 -4.6 q0.6 3 3 4 q-3 -0.4 -6 0.6" stroke-width="0.9"/></svg>
<span class="t" style="left:435.40px;top:891.00px;font-size:13px;color:#1a1d20;transform:scaleX(0.9589);">PDF/CSV</span>
<div class="a" style="left:604px;top:289px;width:655px;height:552px;background:#fff;border-radius:4px 4px 2px 2px;box-shadow:0 8px 22px rgba(0,0,0,.55), 0 1px 4px rgba(0,0,0,.25)"></div>
<div class="a" style="left:604px;top:289px;width:655px;height:39px;background:#d9dadc;border-radius:4px 4px 0 0;border-bottom:1px solid #b4b7ba"></div>
<span class="t" style="left:617.90px;top:300.00px;font-size:17.8px;color:#121314;transform:scaleX(0.9946);">Authentication Profile</span>
<svg style="left:1225px;top:299px" width="22" height="22" fill="none" stroke="#1d1f21" stroke-width="1.4"><circle cx="10.4" cy="10" r="7.9"/></svg>
<span class="t" style="left:1231.90px;top:303.00px;font-size:12px;color:#1d1f21;font-weight:bold;">?</span>
<span class="t" style="left:747.80px;top:345.00px;font-size:12px;color:#55606c;transform:scaleX(0.9436);font-weight:bold;">Name</span>
<div class="a" style="left:784px;top:340px;width:459px;height:20px;border:1px solid #a2a9b0;border-radius:3px;background:#fff"></div>
<span class="t" style="left:790.00px;top:344.00px;font-size:12px;color:#17191b;transform:scaleX(1.0097);">GlobalProtect-auth-profile</span>
<span class="t" style="left:627.40px;top:375.00px;font-size:13.4px;color:#4b5159;transform:scaleX(1.0017);">Authentication</span>
<div class="a" style="left:727px;top:376px;width:1px;height:14px;background:#c3c5c7"></div>
<span class="t" style="left:739.70px;top:375.00px;font-size:13.4px;color:#4b5159;transform:scaleX(0.9211);">Factors</span>
<div class="a" style="left:795px;top:376px;width:1px;height:14px;background:#c3c5c7"></div>
<span class="t" style="left:806.90px;top:375.00px;font-size:13.4px;color:#1f2123;transform:scaleX(0.8977);font-weight:bold;">Advanced</span>
<div class="a" style="left:615px;top:398px;width:630px;height:1px;background:#bfc1c3"></div>
<div class="a" style="left:796px;top:395px;width:80px;height:1px;background:rgba(21,143,224,.45)"></div><div class="a" style="left:795px;top:396px;width:82px;height:2px;background:#158fe0"></div>
<div class="a" style="left:610px;top:400px;width:635px;height:370px;overflow:hidden"><div class="a" style="left:-610px;top:-400px">
<div class="a" style="left:617px;top:415px;width:630px;height:257px;border:1px solid #bcc0c3;border-radius:5px;box-sizing:border-box"></div>
<div class="a" style="left:625px;top:410px;width:64px;height:12px;background:#fff"></div>
<div class="a" style="left:617px;top:683px;width:630px;height:78px;border:1px solid #bcc0c3;border-radius:5px;box-sizing:border-box"></div>
<div class="a" style="left:625px;top:678px;width:102px;height:12px;background:#fff"></div>
</div></div>
<span class="t" style="left:630.60px;top:409.00px;font-size:12px;color:#3f4e5c;transform:scaleX(0.9287);font-weight:bold;">Allow List</span>
<span class="t" style="left:630.60px;top:677.00px;font-size:12px;color:#3f4e5c;transform:scaleX(0.9200);font-weight:bold;">Account Lockout</span>
<div class="a" style="left:625px;top:432px;width:614px;height:228px;border:1px solid #c3c6c8;border-right:none;box-sizing:border-box;background:#fff"></div>
<div class="a" style="left:626px;top:433px;width:613px;height:27px;background:#e9ebea"></div>
<div class="a" style="left:626px;top:459px;width:613px;height:1px;background:#c6c8c9"></div>
<div class="a" style="left:655px;top:433px;width:1px;height:27px;background:#8f9294"></div>
<div class="a" style="left:632px;top:437.3px;width:14.6px;height:14.4px;box-sizing:border-box;border:2px solid #1d78b4;border-radius:3px;background:#fff"></div>
<span class="t" style="left:661.80px;top:440.00px;font-size:11px;color:#2a2d30;transform:scaleX(0.8791);letter-spacing:1.00px;font-weight:bold;">ALLOW LIST</span>
<svg style="left:737px;top:440px" width="14" height="11" fill="none" stroke="#85888a" stroke-width="1.4" stroke-linecap="round" stroke-linejoin="round"><path d="M2.4 8 L7 3.6 L11.6 8"/></svg>
<div class="a" style="left:626px;top:460px;width:613px;height:30px;background:#dcebf4;border-top:1.3px solid #4ba3da;border-bottom:1.3px solid #4ba3da;box-sizing:border-box"></div>
<div class="a" style="left:655px;top:461px;width:1px;height:28px;background:#d0d5d9"></div>
<svg style="left:655.5px;top:461px" width="8" height="8"><path d="M0 0 H6.6 L0 6.6 Z" fill="#cc1d1d"/></svg>
<div class="a" style="left:632.8px;top:464px;width:14.3px;height:14.6px;border-radius:2.4px;background:#0f77b1"></div>
<svg style="left:632.8px;top:464.2px" width="15" height="14" fill="none" stroke="#bfe0f2" stroke-width="1" stroke-linecap="round" stroke-linejoin="round"><path d="M2.8 7.4 L5.8 10.6 L11.8 2.4"/></svg>
<svg style="left:662px;top:465px" width="18" height="20" viewBox="0 0 18 20"><defs><radialGradient id="gh" cx="40%" cy="35%" r="70%"><stop offset="0" stop-color="#fbe3c4"/><stop offset="1" stop-color="#e9b37a"/></radialGradient><linearGradient id="go" x1="0" y1="0" x2="0" y2="1"><stop offset="0" stop-color="#f7a83a"/><stop offset="1" stop-color="#d9660e"/></linearGradient><linearGradient id="gb" x1="0" y1="0" x2="0" y2="1"><stop offset="0" stop-color="#6ea3ea"/><stop offset="1" stop-color="#2b62c8"/></linearGradient></defs><path d="M7.6 16.5 Q7.6 11 11.6 11 Q16.6 11 16.3 15 Q15 17.6 11 17.6 Z" fill="url(#gb)"/><ellipse cx="11.4" cy="5.4" rx="3.9" ry="4.2" fill="#8a5a1e"/><ellipse cx="11.4" cy="6.6" rx="2.9" ry="3.2" fill="url(#gh)"/><path d="M0.8 17.4 Q0.6 11.6 5.6 11.6 Q10.6 11.6 10.4 17.4 Q5.6 20.4 0.8 17.4 Z" fill="url(#go)"/><ellipse cx="5.6" cy="6.6" rx="4.2" ry="4.5" fill="#9a611c"/><ellipse cx="5.6" cy="8" rx="3.2" ry="3.5" fill="url(#gh)"/></svg>
<span class="t" style="left:682.40px;top:468.00px;font-size:12px;color:#17191b;transform:scaleX(0.9492);">VPN_Users_Group</span>
<div class="a" style="left:626px;top:630px;width:613px;height:29px;background:#f4f5f5;border-top:1px solid #d5d7d8;box-sizing:border-box"></div>
<svg style="left:630.0px;top:635.3px" width="20" height="20" fill="none" stroke="#2a76a8" stroke-width="1.2" stroke-linecap="round" stroke-linejoin="round"><circle cx="10" cy="10" r="7.6"/><path d="M6.2 10 H13.8 M10 6.2 V13.8"/></svg>
<span class="t" style="left:652.10px;top:639.00px;font-size:13px;color:#1f2224;transform:scaleX(0.9939);">Add</span>
<svg style="left:687.7px;top:635.3px" width="20" height="20" fill="none" stroke="#d46a6a" stroke-width="1.2" stroke-linecap="round" stroke-linejoin="round"><circle cx="10" cy="10" r="7.6"/><path d="M6.2 10 H13.8"/></svg>
<span class="t" style="left:709.80px;top:639.00px;font-size:13px;color:#1f2224;transform:scaleX(1.0008);">Delete</span>
<span class="t" style="left:706.50px;top:705.00px;font-size:12px;color:#55606c;transform:scaleX(0.9138);font-weight:bold;">Failed Attempts</span>
<div class="a" style="left:794px;top:700px;width:443px;height:20px;border:1px solid #a2a9b0;border-radius:3px;background:#fff"></div>
<span class="t" style="left:803.00px;top:704.00px;font-size:12px;color:#7f97ad;transform:scaleX(1.0182);">[0 - 10]</span>
<span class="t" style="left:688.60px;top:731.00px;font-size:12px;color:#55606c;transform:scaleX(0.9031);font-weight:bold;">Lockout Time (min)</span>
<div class="a" style="left:794px;top:727px;width:443px;height:20px;border:1px solid #a2a9b0;border-radius:3px;background:#fff"></div>
<span class="t" style="left:799.60px;top:731.00px;font-size:12px;color:#17191b;">0</span>
<div class="a" style="left:1078px;top:793px;width:82px;height:31px;border-radius:16px;background:#109ae6"></div>
<span class="t" style="left:1110.20px;top:802.00px;font-size:12.4px;color:#ffffff;transform:scaleX(1.0193);">OK</span>
<div class="a" style="left:1166px;top:793px;width:80px;height:29px;border-radius:16px;background:#fff;border:1px solid #bcbfc3"></div>
<span class="t" style="left:1189.80px;top:802.00px;font-size:12.4px;color:#24282c;transform:scaleX(0.9076);">Cancel</span>
</div>
</body></html>
